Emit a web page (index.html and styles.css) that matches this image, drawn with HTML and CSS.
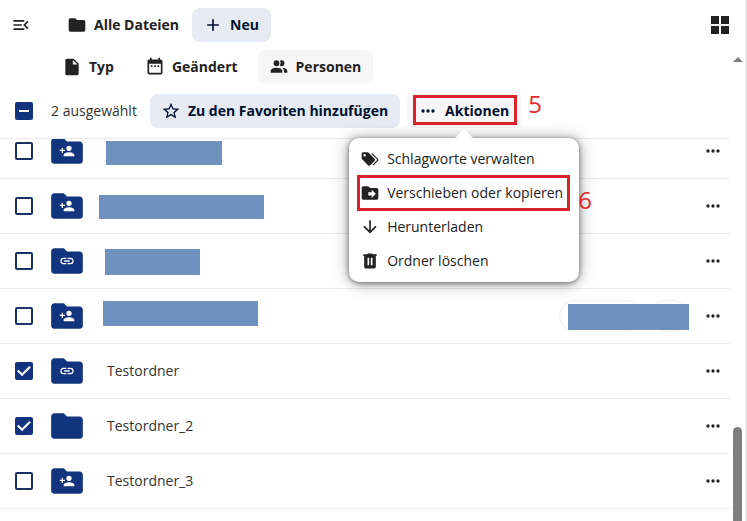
FILE: index.html
```html
<!DOCTYPE html>
<html lang="de">
<head>
<meta charset="utf-8">
<meta name="viewport" content="width=device-width, initial-scale=1">
<title>Alle Dateien</title>
<link rel="stylesheet" href="styles.css">
</head>
<body>
<svg class="sprite" aria-hidden="true">
  <symbol id="menu-open" viewBox="0 0 24 24"><path d="M21,15.61L19.59,17L14.58,12L19.59,7L21,8.39L17.44,12L21,15.61M3,6H16V8H3V6M3,13V11H13V13H3M3,18V16H16V18H3Z"/></symbol>
  <symbol id="folder" viewBox="0 0 24 24"><path d="M10,4H4C2.89,4 2,4.89 2,6V18A2,2 0 0,0 4,20H20A2,2 0 0,0 22,18V8C22,6.89 21.1,6 20,6H12L10,4Z"/></symbol>
  <symbol id="plus" viewBox="0 0 24 24"><path d="M19,13H13V19H11V13H5V11H11V5H13V11H19V13Z"/></symbol>
  <symbol id="file" viewBox="0 0 24 24"><path d="M13,9V3.5L18.5,9M6,2C4.89,2 4,2.89 4,4V20A2,2 0 0,0 6,22H18A2,2 0 0,0 20,20V8L14,2H6Z"/></symbol>
  <symbol id="calendar" viewBox="0 0 24 24"><path d="M9,10H7V12H9V10M13,10H11V12H13V10M17,10H15V12H17V10M19,3H18V1H16V3H8V1H6V3H5C3.89,3 3,3.9 3,5V19A2,2 0 0,0 5,21H19A2,2 0 0,0 21,19V5A2,2 0 0,0 19,3M19,19H5V8H19V19Z"/></symbol>
  <symbol id="people" viewBox="0 0 24 24"><path d="M16 17V19H2V17S2 13 9 13 16 17 16 17M12.5 7.5A3.5 3.5 0 1 0 9 11A3.5 3.5 0 0 0 12.5 7.5M15.94 13A5.32 5.32 0 0 1 18 17V19H22V17S22 13.37 15.94 13M15 4A3.39 3.39 0 0 0 13.07 4.59A5 5 0 0 1 13.07 10.41A3.39 3.39 0 0 0 15 11A3.5 3.5 0 0 0 15 4Z"/></symbol>
  <symbol id="star" viewBox="0 0 24 24"><path d="M12,15.39L8.24,17.66L9.23,13.38L5.91,10.5L10.29,10.13L12,6.09L13.71,10.13L18.09,10.5L14.77,13.38L15.76,17.66M22,9.24L14.81,8.63L12,2L9.19,8.63L2,9.24L7.45,13.97L5.82,21L12,17.27L18.18,21L16.54,13.97L22,9.24Z"/></symbol>
  <symbol id="dots" viewBox="0 0 24 24"><circle cx="6" cy="12" r="2"/><circle cx="12" cy="12" r="2"/><circle cx="18" cy="12" r="2"/></symbol>
  <symbol id="tags" viewBox="0 0 24 24"><path d="M5.5,9A1.5,1.5 0 0,0 7,7.5A1.5,1.5 0 0,0 5.5,6A1.5,1.5 0 0,0 4,7.5A1.5,1.5 0 0,0 5.5,9M17.41,11.58C17.77,11.94 18,12.44 18,13C18,13.55 17.78,14.05 17.41,14.41L12.41,19.41C12.05,19.77 11.55,20 11,20C10.45,20 9.95,19.78 9.58,19.41L2.59,12.42C2.22,12.05 2,11.55 2,11V6C2,4.89 2.89,4 4,4H9C9.55,4 10.05,4.22 10.41,4.58L17.41,11.58M13.54,5.71L14.54,4.71L21.41,11.58C21.78,11.94 22,12.45 22,13C22,13.55 21.78,14.05 21.42,14.41L16.04,19.79L15.04,18.79L20.75,13L13.54,5.71Z"/></symbol>
  <symbol id="move" viewBox="0 0 24 24"><path d="M14,18V15H10V11H14V8L19,13M20,6H12L10,4H4C2.89,4 2,4.89 2,6V18A2,2 0 0,0 4,20H20A2,2 0 0,0 22,18V8C22,6.89 21.1,6 20,6Z"/></symbol>
  <symbol id="down" viewBox="0 0 24 24"><path d="M11,4H13V16L18.5,10.5L19.92,11.92L12,19.84L4.08,11.92L5.5,10.5L11,16V4Z"/></symbol>
  <symbol id="trash" viewBox="0 0 24 24"><path d="M9,3V4H4V6H5V19A2,2 0 0,0 7,21H17A2,2 0 0,0 19,19V6H20V4H15V3H9M9,8H11V17H9V8M13,8H15V17H13V8Z"/></symbol>
  <symbol id="grid" viewBox="0 0 24 24"><path d="M3,11H11V3H3M3,21H11V13H3M13,21H21V13H13M13,3V11H21V3"/></symbol>
  <symbol id="person-plus" viewBox="0 0 24 24"><path d="M15,14C12.33,14 7,15.33 7,18V20H23V18C23,15.33 17.67,14 15,14M6,10V7H4V10H1V12H4V15H6V12H9V10M15,12A4,4 0 0,0 19,8A4,4 0 0,0 15,4A4,4 0 0,0 11,8A4,4 0 0,0 15,12Z"/></symbol>
  <symbol id="link" viewBox="0 0 24 24"><path d="M3.9,12C3.9,10.29 5.29,9 7,9H11V7H7A5,5 0 0,0 2,12A5,5 0 0,0 7,17H11V15H7C5.29,15 3.9,13.71 3.9,12M8,13H16V11H8V13M17,7H13V9H17C18.71,9 20.1,10.29 20.1,12C20.1,13.71 18.71,15 17,15H13V17H17A5,5 0 0,0 22,12A5,5 0 0,0 17,7Z"/></symbol>
</svg>

<div class="app">
  <main class="files">
    <header class="head">
      <div class="bar">
        <button class="icon-btn nav-toggle" aria-label="Navigation öffnen"><svg class="icon"><use href="#menu-open"/></svg></button>
        <a class="btn" href="#"><svg class="icon"><use href="#folder"/></svg>Alle Dateien</a>
        <button class="btn primary"><svg class="icon"><use href="#plus"/></svg>Neu</button>
        <button class="icon-btn view-toggle" aria-label="Kachelansicht"><svg class="icon large"><use href="#grid"/></svg></button>
      </div>
      <div class="bar filters">
        <button class="btn"><svg class="icon"><use href="#file"/></svg>Typ</button>
        <button class="btn"><svg class="icon"><use href="#calendar"/></svg>Geändert</button>
        <button class="btn soft"><svg class="icon"><use href="#people"/></svg>Personen</button>
      </div>
      <div class="bar selection">
        <input class="check mixed" type="checkbox" id="all" aria-label="Alle auswählen">
        <label class="count" for="all">2 ausgewählt</label>
        <button class="btn primary"><svg class="icon"><use href="#star"/></svg>Zu den Favoriten hinzufügen</button>
        <div class="actions">
          <button class="btn soft dark"><svg class="icon"><use href="#dots"/></svg>Aktionen</button>
          <span class="frame frame-actions"></span>
          <span class="step step-actions">5</span>
          <ul class="menu">
            <li><button><svg class="icon"><use href="#tags"/></svg>Schlagworte verwalten</button></li>
            <li><button><svg class="icon"><use href="#move"/></svg>Verschieben oder kopieren</button>
              <span class="frame frame-move"></span><span class="step step-move">6</span></li>
            <li><button><svg class="icon"><use href="#down"/></svg>Herunterladen</button></li>
            <li><button><svg class="icon"><use href="#trash"/></svg>Ordner löschen</button></li>
          </ul>
        </div>
      </div>
    </header>

    <div class="list">
      <table>
        <tbody>
          <tr>
            <td class="c-check"><input class="check" type="checkbox" aria-label="Ordner 1"></td>
            <td class="c-icon"><span class="folder"><svg class="base"><use href="#folder"/></svg><svg class="mark"><use href="#person-plus"/></svg></span></td>
            <td class="c-name"><span class="cover cover-1"></span></td>
            <td class="c-share"></td>
            <td class="c-more"><button class="icon-btn" aria-label="Aktionen"><svg class="icon"><use href="#dots"/></svg></button></td>
          </tr>
          <tr>
            <td class="c-check"><input class="check" type="checkbox" aria-label="Ordner 2"></td>
            <td class="c-icon"><span class="folder"><svg class="base"><use href="#folder"/></svg><svg class="mark"><use href="#person-plus"/></svg></span></td>
            <td class="c-name"><span class="cover cover-2"></span></td>
            <td class="c-share"></td>
            <td class="c-more"><button class="icon-btn" aria-label="Aktionen"><svg class="icon"><use href="#dots"/></svg></button></td>
          </tr>
          <tr>
            <td class="c-check"><input class="check" type="checkbox" aria-label="Ordner 3"></td>
            <td class="c-icon"><span class="folder"><svg class="base"><use href="#folder"/></svg><svg class="mark"><use href="#link"/></svg></span></td>
            <td class="c-name"><span class="cover cover-3"></span></td>
            <td class="c-share"></td>
            <td class="c-more"><button class="icon-btn" aria-label="Aktionen"><svg class="icon"><use href="#dots"/></svg></button></td>
          </tr>
          <tr>
            <td class="c-check"><input class="check" type="checkbox" aria-label="Ordner 4"></td>
            <td class="c-icon"><span class="folder"><svg class="base"><use href="#folder"/></svg><svg class="mark"><use href="#person-plus"/></svg></span></td>
            <td class="c-name"><span class="cover cover-4"></span></td>
            <td class="c-share"><div class="tags"><span class="tag wide"></span><span class="tag"></span></div><span class="cover cover-tags"></span></td>
            <td class="c-more"><button class="icon-btn" aria-label="Aktionen"><svg class="icon"><use href="#dots"/></svg></button></td>
          </tr>
          <tr>
            <td class="c-check"><input class="check" type="checkbox" id="f5" checked></td>
            <td class="c-icon"><span class="folder"><svg class="base"><use href="#folder"/></svg><svg class="mark"><use href="#link"/></svg></span></td>
            <td class="c-name"><label for="f5">Testordner</label></td>
            <td class="c-share"></td>
            <td class="c-more"><button class="icon-btn" aria-label="Aktionen"><svg class="icon"><use href="#dots"/></svg></button></td>
          </tr>
          <tr>
            <td class="c-check"><input class="check" type="checkbox" id="f6" checked></td>
            <td class="c-icon"><span class="folder"><svg class="base"><use href="#folder"/></svg></span></td>
            <td class="c-name"><label for="f6">Testordner_2</label></td>
            <td class="c-share"></td>
            <td class="c-more"><button class="icon-btn" aria-label="Aktionen"><svg class="icon"><use href="#dots"/></svg></button></td>
          </tr>
          <tr>
            <td class="c-check"><input class="check" type="checkbox" id="f7"></td>
            <td class="c-icon"><span class="folder"><svg class="base"><use href="#folder"/></svg><svg class="mark"><use href="#person-plus"/></svg></span></td>
            <td class="c-name"><label for="f7">Testordner_3</label></td>
            <td class="c-share"></td>
            <td class="c-more"><button class="icon-btn" aria-label="Aktionen"><svg class="icon"><use href="#dots"/></svg></button></td>
          </tr>
        </tbody>
      </table>
    </div>
  </main>
  <div class="scrollbar"><span class="scroll-up"></span><span class="thumb"></span></div>
</div>
</body>
</html>
```
FILE: styles.css
```css
:root {
  --blue: #12347f;
  --ink: #222;
  --line: #ebebeb;
  --red: #d9232b;
}

* { box-sizing: border-box; }

body {
  margin: 0;
  background: #fff;
  color: var(--ink);
  font: 14px/20px "Open Sans", "Noto Sans", sans-serif;
}

button {
  margin: 0;
  border: 0;
  background: none;
  color: inherit;
  font: inherit;
}

svg { display: block; fill: currentColor; }

.sprite { position: absolute; width: 0; height: 0; }

.app {
  display: flex;
  height: 100vh;
  overflow: hidden;
  border-right: 2px solid #e8e8e8;
}

.files {
  display: flex;
  flex: 1;
  flex-direction: column;
  min-width: 0;
}

/* Header bars */
.head {
  display: flex;
  flex-direction: column;
  gap: 8px;
  padding: 8px 0 10px;
  border-bottom: 1px solid var(--line);
}

.bar { display: flex; align-items: center; gap: 1px; }
.bar.filters { gap: 8px; padding-left: 51px; }
.selection { margin-top: 2px; padding-left: 15px; }

.icon { flex: none; width: 20px; height: 20px; }
.icon.large { width: 24px; height: 24px; }

.btn {
  display: flex;
  align-items: center;
  gap: 7px;
  height: 34px;
  padding: 0 12px 0 11px;
  border-radius: 8px;
  color: var(--ink);
  font-weight: 700;
  text-decoration: none;
  white-space: nowrap;
}

.primary { background: #e6eaf2; color: #00102e; }
.soft { background: #f6f6f6; }
.dark { color: #00102e; }

.icon-btn { display: grid; place-items: center; padding: 0; }
.nav-toggle { margin: 0 24px 0 11px; }
.view-toggle { margin-left: auto; margin-right: -2px; }

.count { margin: 0 12px 0 17px; color: #333; }

/* Check boxes */
.check {
  display: grid;
  flex: none;
  width: 18px;
  height: 18px;
  margin: 0;
  border: 2px solid #1a3163;
  border-radius: 2px;
  appearance: none;
}

.check:checked, .mixed { border-color: var(--blue); background: var(--blue); }

.check:checked::before {
  width: 14px;
  height: 14px;
  background: #fff;
  clip-path: polygon(0 52%, 11% 41%, 36% 66%, 88% 14%, 99% 25%, 36% 88%);
  content: "";
}

.mixed::before {
  place-self: center;
  width: 10px;
  height: 2px;
  background: #fff;
  content: "";
}

/* Actions menu */
.actions { position: relative; margin-left: 6px; }

.menu {
  position: absolute;
  z-index: 1;
  top: 44px;
  left: 50%;
  width: 230px;
  margin: 0;
  padding: 4px;
  border-radius: 10px;
  background: #fff;
  box-shadow: 0 1px 5px rgba(0, 0, 0, .45), 0 1px 16px rgba(0, 0, 0, .4);
  list-style: none;
  transform: translateX(-50%);
}

.menu::before {
  position: absolute;
  bottom: 100%;
  left: 50%;
  margin-left: -9px;
  border: 9px solid transparent;
  border-top-width: 0;
  border-bottom-color: #fff;
  content: "";
}

.menu li { position: relative; }

.menu button {
  display: flex;
  align-items: center;
  gap: 7px;
  width: 100%;
  height: 34px;
  padding: 0 7px;
  white-space: nowrap;
}

/* Numbered step marks */
.frame { position: absolute; border: 3px solid var(--red); pointer-events: none; }
.frame-actions { inset: 1px 4px 3px 6px; }
.frame-move { inset: -1px 5px -1px 4px; }

.step { position: absolute; color: #e5262c; font-size: 24px; line-height: 24px; }
.step-actions { top: -2px; left: calc(100% + 7px); }
.step-move { top: 12px; left: calc(100% + 3px); }

/* File list */
.list { flex: 1; min-height: 0; overflow: hidden; }

table {
  width: 100%;
  margin-top: -15px;
  border-collapse: separate;
  border-spacing: 0;
  table-layout: fixed;
}

td {
  position: relative;
  height: 55px;
  padding: 0;
  border-bottom: 1px solid var(--line);
  vertical-align: middle;
}

.c-check { width: 48px; padding-left: 15px; }
.c-icon { width: 59px; }
.c-name { color: #333; }
.c-share { width: 134px; }
.c-more { width: 37px; }
.c-more .icon-btn { margin-left: 10px; }

.folder { display: grid; width: 38px; color: var(--blue); }
.folder svg { grid-area: 1 / 1; }
.base { width: 38px; height: 38px; }
.mark { place-self: center; width: 16px; height: 16px; color: #fff; }

.tags { display: flex; gap: 8px; }
.tag { width: 38px; height: 32px; border: 1px solid #f0f0f0; border-radius: 16px; }
.tag.wide { width: 84px; }

/* Redacted names */
.cover { position: absolute; background: #6f91be; }
.cover-1 { top: 17px; left: -1px; width: 116px; height: 24px; }
.cover-2 { top: 16px; left: -8px; width: 165px; height: 24px; }
.cover-3 { top: 15px; left: -2px; width: 95px; height: 26px; }
.cover-4 { top: 12px; left: -4px; width: 155px; height: 25px; }
.cover-tags { top: 15px; left: 9px; width: 121px; height: 26px; }

/* Scroll bar */
.scrollbar {
  display: flex;
  flex: none;
  flex-direction: column;
  align-items: center;
  width: 15px;
  padding-top: 57px;
}

.scroll-up { border: 5px solid transparent; border-top-width: 0; border-bottom-color: #7d7d7d; }

.thumb {
  width: 9px;
  height: 18vh;
  margin-top: auto;
  border-radius: 5px 5px 0 0;
  background: #7d7d7d;
}
```
